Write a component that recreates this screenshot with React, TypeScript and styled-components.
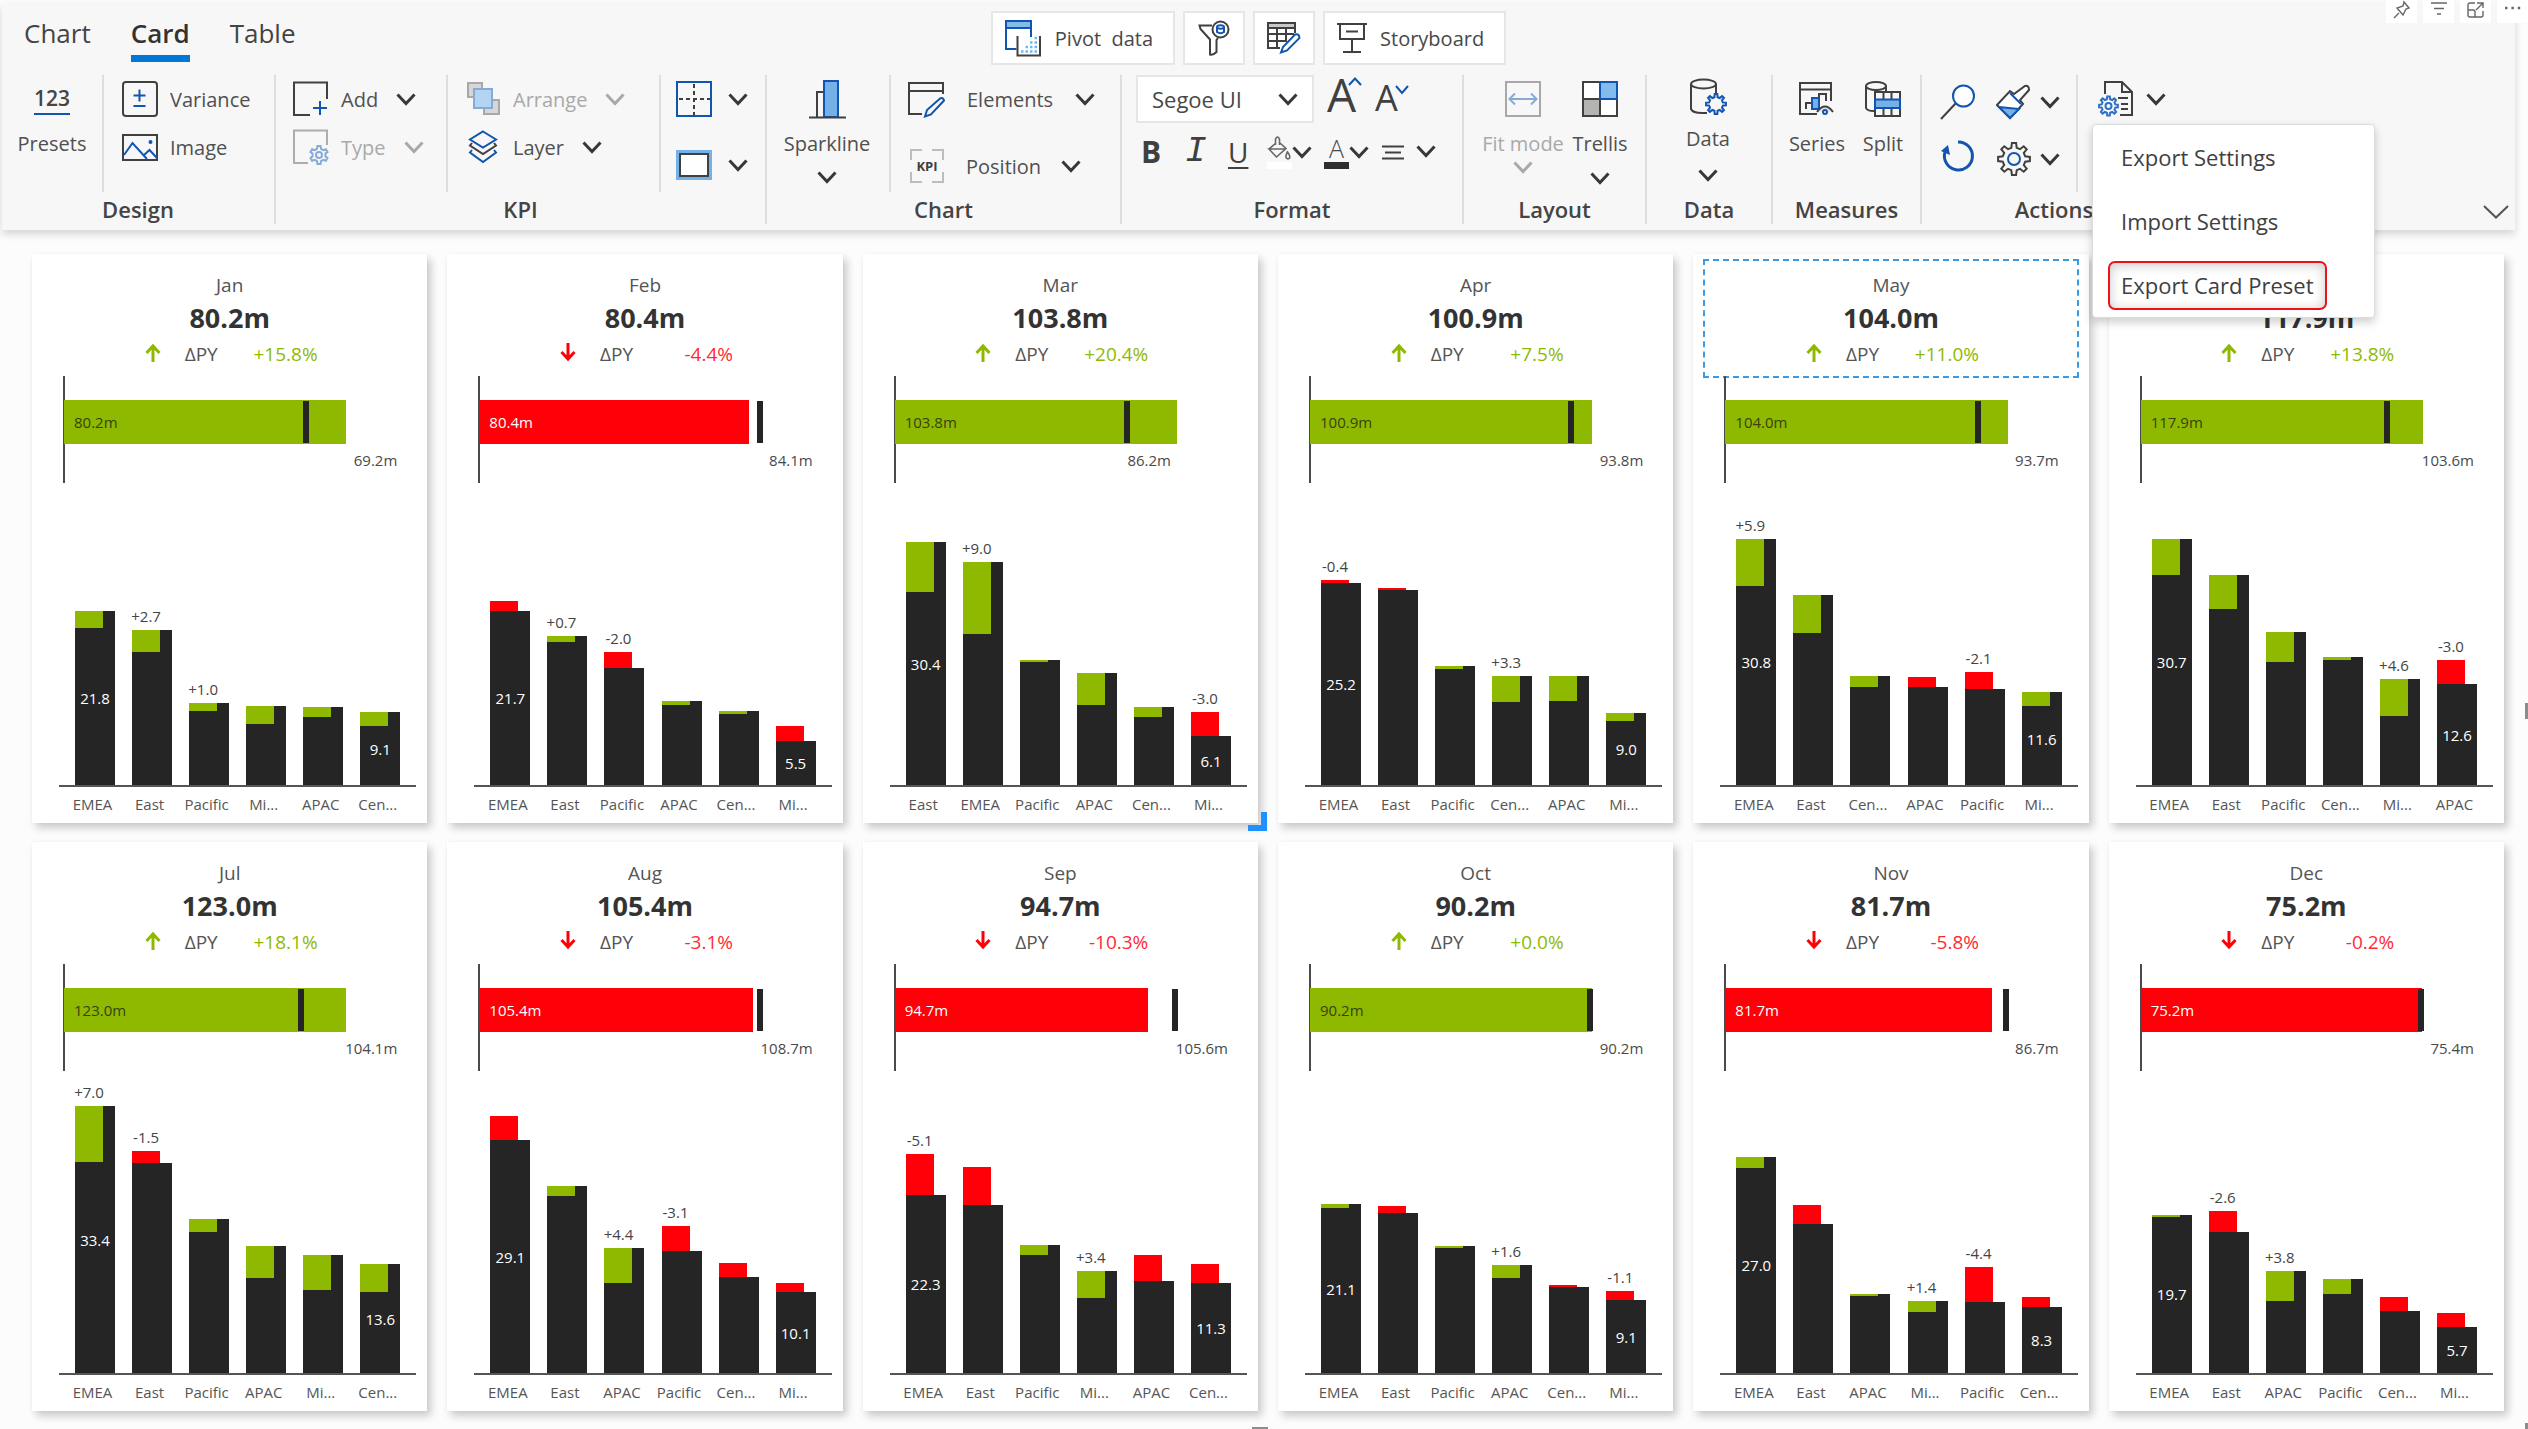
import React from "react";
import styled, { createGlobalStyle, css } from "styled-components";

const BLUE = "#1155b0";
const LIGHT = "#74b1e8";
const INK = "#404040";
const GREEN = "#8fb900";
const RED = "#ff0008";
const BAR = "#252525";
const UNIT = 8; /* pixels per million in the column charts */

const Global = createGlobalStyle`
  *, *::before, *::after { box-sizing: border-box; }
  body { margin: 0; background: #fcfcfc; }
  body, button, select { font-family: "Open Sans", "Noto Sans", sans-serif; color: #484848; }
  button { border: 0; padding: 0; background: none; cursor: pointer; font-size: 20px; }
  svg { display: block; flex: none; }
`;

/* ---------- page and ribbon ---------- */

const Page = styled.div`
  position: relative;
  min-height: 100vh;
  padding: 3px 13px 0 2px;
  background: #fcfcfc;
  overflow: hidden;
`;

const Ribbon = styled.header`
  background: #f7f7f7;
  box-shadow: 0 4px 8px rgba(0, 0, 0, 0.16);
  padding-bottom: 6px;
`;

const TopRow = styled.div`
  display: grid;
  grid-template-columns: 1fr auto 1fr;
  height: 72px;
  padding: 8px 20px 0 0;
`;

const Tabs = styled.nav`
  display: flex;
  gap: 40px;
  padding-left: 22px;
`;

const Tab = styled.button<{ $active?: boolean }>`
  height: 51px;
  font-size: 26px;
  line-height: 44px;
  border-bottom: 7px solid ${(p) => (p.$active ? "#0078d7" : "transparent")};
  font-weight: ${(p) => (p.$active ? 600 : 400)};
  color: ${(p) => (p.$active ? "#333" : "#444")};
`;

const TopTools = styled.div`
  display: flex;
  gap: 8px;
`;

const ToolBox = styled.button`
  display: flex;
  align-items: center;
  justify-content: center;
  gap: 13px;
  min-width: 62px;
  height: 54px;
  padding: 0 12px;
  background: #fff;
  border: 2px solid #e6e6e6;
  white-space: pre;

  span { padding-right: 8px; }
`;

const Groups = styled.div`
  display: flex;
  align-items: flex-start;
`;

const Group = styled.section<{ $w: number; $last?: boolean }>`
  flex: 0 0 ${(p) => p.$w}px;
  height: 149px;
  border-right: ${(p) => (p.$last ? "0" : "2px solid #dedede")};
`;

const GroupBody = styled.div`
  display: flex;
  height: 117px;
`;

const GroupName = styled.h2`
  margin: 0;
  font-size: 22px;
  font-weight: 600;
  line-height: 34px;
  text-align: center;
  color: #444;
`;

const Cluster = styled.div<{ $w?: number; $gap?: number; $line?: boolean; $pad?: number }>`
  display: flex;
  flex-direction: column;
  align-items: flex-start;
  gap: ${(p) => p.$gap || 0}px;
  ${(p) => (p.$w ? `flex: 0 0 ${p.$w}px;` : "flex: 1;")}
  padding-left: ${(p) => p.$pad || 0}px;
  border-right: ${(p) => (p.$line ? "2px solid #dedede" : "0")};
`;

const Item = styled.button<{ $off?: boolean; $gap?: number; $h?: number }>`
  display: flex;
  align-items: center;
  gap: ${(p) => p.$gap ?? 12}px;
  height: ${(p) => p.$h || 48}px;
  white-space: nowrap;
  color: ${(p) => (p.$off ? "#a9a9a9" : "#505050")};
`;

const IconSlot = styled.span<{ $w?: number }>`
  display: flex;
  justify-content: center;
  width: ${(p) => p.$w || 36}px;
`;

const Caret = styled.span`
  padding-left: 6px;
`;

const Tall = styled.button<{ $off?: boolean; $w: number; $icon?: number; $caret?: number }>`
  display: grid;
  grid-template-rows: ${(p) => p.$icon || 48}px 40px ${(p) => p.$caret || 28}px;
  place-items: center;
  width: ${(p) => p.$w}px;
  white-space: nowrap;
  color: ${(p) => (p.$off ? "#a9a9a9" : "#505050")};
`;

const LayoutBody = styled(GroupBody)`
  padding-left: 12px;
`;

const Digits = styled.span`
  font-size: 21px;
  font-weight: 600;
  line-height: 30px;
  color: #444;
  border-bottom: 2px solid ${BLUE};
`;

const FontRow = styled.div`
  display: flex;
  align-items: center;
  height: 48px;
  gap: 13px;
`;

const SelectWrap = styled.label`
  position: relative;
  display: block;

  svg {
    position: absolute;
    right: 16px;
    top: 18px;
    pointer-events: none;
  }
`;

const FontSelect = styled.select`
  appearance: none;
  display: block;
  width: 178px;
  height: 48px;
  padding: 0 40px 0 14px;
  border: 2px solid #e6e6e6;
  border-radius: 0;
  background: #fff;
  font-size: 22px;
`;

const SizeButton = styled.button<{ $big?: boolean }>`
  display: flex;
  align-items: flex-start;
  height: 48px;
  font-size: ${(p) => (p.$big ? 46 : 36)}px;
  line-height: ${(p) => (p.$big ? 38 : 46)}px;
  color: ${INK};

  svg { margin: 2px 0 0 ${(p) => (p.$big ? -8 : -3)}px; }
`;

const FormatRow = styled.div`
  display: grid;
  grid-template-columns: 44px 43px 44px 57px 52px 1fr;
  align-items: center;
  height: 48px;
  width: 310px;
  margin-top: 5px;
`;

const Glyph = styled.button<{ $kind: "b" | "i" | "u" }>`
  height: 48px;
  text-align: left;
  padding-left: 5px;
  line-height: 44px;
  color: ${INK};
  font-size: 30px;
  ${(p) => p.$kind === "b" && css`font-weight: 700;`}
  ${(p) => p.$kind === "i" && css`font-family: "Liberation Mono", monospace; font-style: italic; font-size: 36px;`}
  ${(p) => p.$kind === "u" && css`font-size: 28px; line-height: 42px; text-decoration: underline; text-decoration-thickness: 2px; text-underline-offset: 4px;`}
`;

const Swatch = styled.button<{ $color: string }>`
  display: flex;
  align-items: center;

  > span {
    display: flex;
    justify-content: center;
    width: 25px;
    height: 33px;
    font-size: 25px;
    font-weight: 300;
    line-height: 24px;
    border-bottom: 7px solid ${(p) => p.$color};
  }
`;

const AlignButton = styled.button`
  display: flex;
  gap: 12px;
  padding-left: 6px;
`;

const MenuAnchor = styled.div`
  position: relative;
`;

const Menu = styled.div`
  position: absolute;
  z-index: 5;
  top: 49px;
  left: -6px;
  display: grid;
  justify-items: start;
  gap: 15px;
  width: 283px;
  padding: 8px 0 7px 15px;
  background: #fff;
  border: 1px solid #dcdcdc;
  border-radius: 4px;
  box-shadow: 0 4px 10px rgba(0, 0, 0, 0.2);
`;

const MenuItem = styled.button<{ $marked?: boolean }>`
  height: 49px;
  padding: 0 11px 2px;
  border: 2px solid ${(p) => (p.$marked ? "#f0101a" : "transparent")};
  border-radius: 7px;
  box-shadow: ${(p) => (p.$marked ? "inset 0 2px 12px rgba(0, 0, 0, 0.22)" : "none")};
  font-size: 22px;
  white-space: nowrap;
  color: #404040;
`;

const Collapse = styled.button`
  margin: 130px 6px 0 auto;
`;

const VisualTools = styled.div`
  position: absolute;
  z-index: 6;
  top: 0;
  right: 0;
  display: flex;
  gap: 6px;

  button {
    display: flex;
    justify-content: center;
    width: 31px;
    height: 23px;
    background: #fff;
  }
`;

const Handle = styled.i<{ $at: "right" | "bottom" | "corner" }>`
  position: absolute;
  background: #8c8c8c;
  ${(p) => p.$at === "right" && css`right: 0; top: 703px; width: 3px; height: 16px;`}
  ${(p) => p.$at === "bottom" && css`left: 1252px; bottom: 0; width: 16px; height: 2px;`}
  ${(p) => p.$at === "corner" && css`right: 0; bottom: 0; width: 3px; height: 6px;`}
`;

/* ---------- cards ---------- */

const Board = styled.main`
  display: grid;
  grid-template-columns: repeat(6, minmax(0, 1fr));
  gap: 19px 20px;
  padding: 24px 11px 18px 30px;
`;

const CardBox = styled.article`
  position: relative;
  background: #fff;
  box-shadow: 4px 5px 8px rgba(0, 0, 0, 0.2), 0 0 4px rgba(0, 0, 0, 0.03);
`;

const Head = styled.div<{ $selected?: boolean }>`
  height: 115px;
  margin: 0 12px;
  padding-top: 11px;
  text-align: center;
  outline: ${(p) => (p.$selected ? "2px dashed #3c9be0" : "0")};
`;

const HeadPad = styled.div`
  padding-top: 7px;
`;

const Month = styled.div`
  height: 27px;
  font-size: 19px;
  line-height: 26px;
  color: #555;
`;

const Total = styled.div`
  font-size: 27px;
  font-weight: 700;
  line-height: 38px;
  color: #333;
`;

const Change = styled.div`
  display: flex;
  align-items: center;
  width: 176px;
  padding-left: 3px;
  margin: 0 auto;
  font-size: 19px;
  line-height: 34px;
  color: #555;

  svg { margin: 0 24px 4px 0; }
`;

const Percent = styled.span<{ $up: boolean }>`
  margin-left: auto;
  color: ${(p) => (p.$up ? GREEN : "#ff2a35")};
`;

const Bullet = styled.div`
  position: relative;
  height: 107px;
  margin: 0 30px 0 31px;
  padding-top: 24px;
  border-left: 2px solid #4a4a4a;
  font-size: 15px;
`;

const Track = styled.div`
  position: relative;
  width: 85%;
  height: 44px;
  margin-left: -1px;
`;

const Actual = styled.div<{ $up: boolean }>`
  height: 44px;
  padding-left: 10px;
  line-height: 44px;
  background: ${(p) => (p.$up ? GREEN : RED)};
  color: ${(p) => (p.$up ? "#37430c" : "#fff")};
`;

const Target = styled.div`
  position: absolute;
  top: 1px;
  width: 6px;
  height: 42px;
  margin-left: -5px;
  background: ${BAR};
`;

const TargetText = styled.div<{ $near?: boolean }>`
  line-height: 32px;
  text-align: right;
  color: #4a4a4a;
  padding-right: ${(p) => (p.$near ? 57 : 0)}px;
`;

const Plot = styled.div`
  display: flex;
  align-items: flex-end;
  justify-content: space-between;
  height: 304px;
  margin: 0 11px 0 27px;
  padding: 0 16px;
  border-bottom: 2px solid #555;
`;

const Column = styled.div`
  width: 40px;
`;

const DeltaText = styled.div`
  display: flex;
  justify-content: center;
  width: 28px;
  font-size: 15px;
  line-height: 28px;
  white-space: nowrap;
  color: #444;
`;

const Delta = styled.div<{ $up: boolean }>`
  width: 28px;
  background: ${(p) => (p.$up ? GREEN : RED)};
`;

const Bar = styled.div`
  position: relative;
  background: ${BAR};
  color: #fff;
  font-size: 15px;

  ${Delta} { position: absolute; top: 0; left: 0; }
`;

const Value = styled.span`
  display: flex;
  align-items: center;
  justify-content: center;
  height: 100%;
`;

const Regions = styled.div`
  display: grid;
  grid-template-columns: repeat(6, 1fr);
  margin: 0 21px 0 32px;
  font-size: 15px;
  line-height: 34px;
  height: 36px;
  text-align: center;
  color: #555;
`;

const Corner = styled.i`
  position: absolute;
  right: -9px;
  bottom: -8px;
  width: 19px;
  height: 19px;
  border: solid #1e90ff;
  border-width: 0 6px 6px 0;
`;

/* ---------- icons ---------- */

function gear(cx: number, cy: number, ro: number, ri: number, n = 8) {
  const step = (Math.PI * 2) / n;
  let d = "";
  for (let i = 0; i < n; i++) {
    const a = i * step - Math.PI / 2;
    const pts: [number, number][] = [
      [ri, a - step * 0.3],
      [ro, a - step * 0.17],
      [ro, a + step * 0.17],
      [ri, a + step * 0.3],
    ];
    pts.forEach(([r, t], k) => {
      d += (i || k ? "L" : "M") + (cx + r * Math.cos(t)).toFixed(1) + " " + (cy + r * Math.sin(t)).toFixed(1);
    });
  }
  return d + "Z";
}

const Svg = ({ w, h, c = INK, sw = 2, children }: { w: number; h: number; c?: string; sw?: number; children: React.ReactNode }) => (
  <svg width={w} height={h} viewBox={`0 0 ${w} ${h}`} fill="none" stroke={c} strokeWidth={sw} aria-hidden="true">
    {children}
  </svg>
);

const Chevron = ({ off, thin }: { off?: boolean; thin?: boolean }) =>
  thin ? (
    <Svg w={26} h={14} c="#555"><path d="M1 1 13 12.500 25 1" /></Svg>
  ) : (
    <Svg w={20} h={13} c={off ? "#a9a9a9" : "#383838"} sw={3}><path d="M1.500 1.500 10 10.500 18.500 1.500" /></Svg>
  );

const VarianceIcon = () => (
  <Svg w={36} h={36}><rect x="1" y="1" width="34" height="34" rx="3" /><path stroke={BLUE} d="M17.500 8.500v12M11.500 14.500h12M11.500 25h12" /></Svg>
);
const ImageIcon = () => (
  <Svg w={36} h={27}><rect x="1" y="1" width="34" height="25" /><path stroke={BLUE} d="M2 21 10.500 9 25 25M22 21l5.500-5L35 24" /><circle cx="28.500" cy="8" r="1" stroke={BLUE} fill={BLUE} /></Svg>
);
const AddIcon = () => (
  <Svg w={36} h={36}><path d="M34 18V1.500H1V34H17" /><path stroke={BLUE} d="M27 20v14M20 27h14" /></Svg>
);
const TypeIcon = () => (
  <Svg w={36} h={36} c="#adadad"><path d="M34 16V1.500H1V34H15" /><path stroke="#86abd8" d={gear(26, 26, 9, 6.5, 6)} /><circle cx="26" cy="26" r="3" stroke="#86abd8" /></Svg>
);
const ArrangeIcon = () => (
  <Svg w={33} h={34} c="#a8a8a8"><rect x="1" y="1" width="14" height="14" fill="#d6d6d6" /><rect x="17" y="18" width="15" height="14" fill="#d6d6d6" /><rect x="7" y="7" width="18" height="19" fill="#b5d4f2" stroke="#86abd8" /></Svg>
);
const LayerIcon = () => (
  <Svg w={32} h={34}><path stroke={BLUE} d="M5 20 3 22.500 16 32 29 22.500 27 20" /><path d="M5 13 3 15.500 16 24 29 15.500 27 13" /><path stroke={BLUE} fill="#f7f7f7" d="M16 1.500 29 9.500 16 17.500 3 9.500Z" /></Svg>
);
const BordersIcon = () => (
  <Svg w={36} h={36}><path strokeDasharray="4 3" d="M18 3V34M3 18H34" /><rect x="1" y="1" width="34" height="34" stroke={BLUE} /></Svg>
);
const FrameIcon = () => (
  <Svg w={36} h={30}><rect width="36" height="30" fill={LIGHT} stroke="none" /><rect x="4" y="4" width="28" height="22" fill="#fff" /></Svg>
);
const SparkIcon = () => (
  <Svg w={37} h={39}><path d="M8 37V12h8" /><rect x="15" y="1" width="14" height="36" fill={LIGHT} stroke={BLUE} /><path d="M0 37.500H37" /></Svg>
);
const ElementsIcon = () => (
  <Svg w={37} h={37}><path d="M35 13V2H1V33H14M1 10H35" /><path stroke={BLUE} fill="#f7f7f7" d="M17 35.500 19 29 32 17.500Q35 16 36 19.500L23 33.500Z" /></Svg>
);
const KpiIcon = () => (
  <Svg w={34} h={34} c="#bdbdbd">
    <path d="M1 11V1H12M22 1H33V11M33 23V33H22M12 33H1V23" />
    <text x="17" y="22" textAnchor="middle" fontSize="13" fontWeight="700" fontFamily="Open Sans, sans-serif" fill={INK} stroke="none">KPI</text>
  </Svg>
);
const FitIcon = () => (
  <Svg w={36} h={36} c="#a8a8a8"><rect x="1" y="1" width="34" height="34" /><path stroke="#86abd8" d="M5 18H31M10 12.500 4.500 18 10 23.500M26 12.500 31.500 18 26 23.500" /></Svg>
);
const TrellisIcon = () => (
  <Svg w={36} h={36}><rect x="1" y="1" width="34" height="34" fill="#fff" /><rect x="1" y="18" width="17" height="17" fill="#b4b4b2" /><path d="M18 18V35" /><rect x="18" y="1" width="17" height="17" fill="#82bbec" stroke={BLUE} /></Svg>
);
const DataIcon = () => (
  <Svg w={37} h={37}><ellipse cx="13.500" cy="6" rx="12.500" ry="4.500" /><path d="M1 6V31Q3 35.500 14 35H17M26 6V15" /><path stroke={BLUE} fill="#f7f7f7" d={gear(26, 26, 10, 7)} /></Svg>
);
const SeriesIcon = () => (
  <Svg w={36} h={36}><path d="M32 20V2H1V33H18M1 8.500H32" /><path d="M7 28V22h6M20 28V13h7v7" /><rect x="13" y="17" width="7" height="11" fill={LIGHT} stroke={BLUE} /><path d="M18 31Q26 20 34 31" fill="#e6e6e6" /><circle cx="26" cy="31" r="2" stroke={BLUE} /></Svg>
);
const SplitIcon = () => (
  <Svg w={36} h={36}><ellipse cx="11" cy="5" rx="10" ry="4" /><path d="M1 5V27Q2 30 9 30M21 5V10" /><rect x="10" y="11" width="25" height="24" fill="#f7f7f7" /><path d="M18.500 11V35M26.500 11V35" /><rect x="10" y="18.500" width="25" height="8.500" fill={LIGHT} stroke={BLUE} /></Svg>
);
const SearchIcon = () => (
  <Svg w={36} h={36}><path d="M16 19 1 35" /><circle cx="23.500" cy="12" r="10.500" fill="#fff" stroke={BLUE} /></Svg>
);
const BrushIcon = () => (
  <Svg w={36} h={36}><path fill="#fff" d="M1 21 14 7 18 10 29 2Q33 1 33 6L24 16 27 20 14 34Z" /><path fill={LIGHT} stroke={BLUE} d="M3 23 23 25 14 34Z" /><path stroke={BLUE} d="M14 9 25 20" /></Svg>
);
const ResetIcon = () => (
  <Svg w={36} h={36} c={BLUE} sw={3}><path d="M18 4A14 14 0 1 1 5 14" /><path fill={BLUE} stroke="none" d="M1 13 8 7 10 17Z" /></Svg>
);
const GearIcon = () => (
  <Svg w={36} h={36}><path d={gear(18, 18, 16, 11.5)} /><circle cx="18" cy="18" r="6" stroke={BLUE} /></Svg>
);
const DocGearIcon = () => (
  <Svg w={36} h={36}><path d="M7 13V1H24L34 11V34H22M24 1V11H34M20 17H30M23 23H30M23 28H30" /><path stroke="#2f6fc4" d={gear(10.5, 25, 9.5, 7)} /><circle cx="10.500" cy="25" r="3" stroke="#2f6fc4" /></Svg>
);
const PivotIcon = () => (
  <Svg w={37} h={37}>
    <rect x="1" y="1" width="25" height="28" fill="#fff" stroke={BLUE} /><rect x="1" y="1" width="25" height="7" fill="#82bbec" stroke={BLUE} />
    <path fill="#fff" stroke="none" d="M11.500 17H36V36H11.500Z" />
    <path d="M12.500 16V35.500H35V16" />
    <path stroke="#6fb8ee" strokeWidth="2.500" strokeDasharray="2.500 2" d="M16 31.500H33M20.500 27H33M25 22.500H33M29.500 18H33" />
  </Svg>
);
const FilterIcon = () => (
  <Svg w={32} h={37}>
    <path d="M14 5.500H1.500L2.500 9 12 19.500V34.500Q15 35.500 18.500 32V20L20 18" />
    <circle cx="22.500" cy="9.500" r="8" fill="#fff" />
    <ellipse cx="22.500" cy="7" rx="3.500" ry="1.800" stroke={BLUE} /><path stroke={BLUE} d="M19 7V12Q22.500 14.500 26 12V7" />
  </Svg>
);
const TableEditIcon = () => (
  <Svg w={34} h={32}><rect x="1" y="1" width="27" height="5" fill="#c8c8c8" /><path d="M28 11V1H1V26H13M1 12H27M1 19H19M10 6V26M19 6V20" /><path stroke={BLUE} fill="#fff" d="M14 30.500 16 25 28 12.500Q32 11 32.500 16L20 28.500Z" /></Svg>
);
const StoryIcon = () => (
  <Svg w={30} h={32}><path d="M0 2H30M3 2V17H27V2M9 9.500H21M15 17V30M6 30H24" /></Svg>
);
const BucketIcon = () => (
  <Svg w={25} h={24} c="#666" sw={1.6}><path d="M2 13 9 7M13 7 19 12.500 9.500 21 2 13H19M8.500 9V3Q10.500-1 12.500 3V9" /><path d="M20.500 16Q25 22 21 23 17 22 20.500 16Z" /></Svg>
);
const AlignIcon = () => (
  <Svg w={22} h={15}><path d="M0 1.500H22M3 7.500H19M0 13.500H22" /></Svg>
);

const Arrow = ({ up }: { up: boolean }) => (
  <Svg w={16} h={19} c={up ? GREEN : RED} sw={3}>
    {up ? <path d="M8 19V2.500M1.500 10 8 3 14.500 10" /> : <path d="M8 0V16.500M1.500 9 8 16 14.500 9" />}
  </Svg>
);

/* ---------- data ---------- */

type Col = [string, number, number, boolean?]; /* region, value, delta, delta label shown */
type CardData = { m: string; act: number; tgt: number; pct: string; cols: Col[]; near?: boolean; selected?: boolean; corner?: boolean };

const CARDS: CardData[] = [
  { m: "Jan", act: 80.2, tgt: 69.2, pct: "+15.8%", cols: [["EMEA", 21.8, 2.1], ["East", 19.4, 2.7, true], ["Pacific", 10.2, 1.0, true], ["Mi...", 9.9, 2.3], ["APAC", 9.8, 1.3], ["Cen...", 9.1, 1.7]] },
  { m: "Feb", act: 80.4, tgt: 84.1, pct: "-4.4%", cols: [["EMEA", 21.7, -1.3], ["East", 18.6, 0.7, true], ["Pacific", 14.6, -2.0, true], ["APAC", 10.5, 0.5], ["Cen...", 9.3, 0.4], ["Mi...", 5.5, -1.9]] },
  { m: "Mar", act: 103.8, tgt: 86.2, pct: "+20.4%", near: true, corner: true, cols: [["East", 30.4, 6.2], ["EMEA", 27.9, 9.0, true], ["Pacific", 15.6, 0.3], ["APAC", 14.0, 4.0], ["Cen...", 9.8, 1.3], ["Mi...", 6.1, -3.0, true]] },
  { m: "Apr", act: 100.9, tgt: 93.8, pct: "+7.5%", cols: [["EMEA", 25.2, -0.4, true], ["East", 24.4, -0.2], ["Pacific", 14.9, 0.4], ["Cen...", 13.6, 3.3, true], ["APAC", 13.6, 3.1], ["Mi...", 9.0, 1.0]] },
  { m: "May", act: 104.0, tgt: 93.7, pct: "+11.0%", selected: true, cols: [["EMEA", 30.8, 5.9, true], ["East", 23.8, 4.8], ["Cen...", 13.6, 1.4], ["APAC", 12.2, -1.2], ["Pacific", 12.0, -2.1, true], ["Mi...", 11.6, 1.7]] },
  { m: "", act: 117.9, tgt: 103.6, pct: "+13.8%", cols: [["EMEA", 30.7, 4.5], ["East", 26.2, 4.3], ["Pacific", 19.1, 3.7], ["Cen...", 16.0, 0.4], ["Mi...", 13.3, 4.6, true], ["APAC", 12.6, -3.0, true]] },
  { m: "Jul", act: 123.0, tgt: 104.1, pct: "+18.1%", cols: [["EMEA", 33.4, 7.0, true], ["East", 26.2, -1.5, true], ["Pacific", 19.3, 1.6], ["APAC", 15.9, 4.0], ["Mi...", 14.7, 4.4], ["Cen...", 13.6, 3.5]] },
  { m: "Aug", act: 105.4, tgt: 108.7, pct: "-3.1%", cols: [["EMEA", 29.1, -3.0], ["East", 23.4, 1.2], ["APAC", 15.6, 4.4, true], ["Pacific", 15.3, -3.1, true], ["Cen...", 12.0, -1.7], ["Mi...", 10.1, -1.1]] },
  { m: "Sep", act: 94.7, tgt: 105.6, pct: "-10.3%", cols: [["EMEA", 22.3, -5.1, true], ["East", 21.0, -4.8], ["Pacific", 16.0, 1.2], ["Mi...", 12.7, 3.4, true], ["APAC", 11.5, -3.2], ["Cen...", 11.3, -2.4]] },
  { m: "Oct", act: 90.2, tgt: 90.2, pct: "+0.0%", cols: [["EMEA", 21.1, 0.5], ["East", 20.0, -0.9], ["Pacific", 15.9, 0.3], ["APAC", 13.5, 1.6, true], ["Cen...", 10.7, -0.2], ["Mi...", 9.1, -1.1, true]] },
  { m: "Nov", act: 81.7, tgt: 86.7, pct: "-5.8%", cols: [["EMEA", 27.0, 1.4], ["East", 18.6, -2.4], ["APAC", 9.9, 0.2], ["Mi...", 9.0, 1.4, true], ["Pacific", 8.9, -4.4, true], ["Cen...", 8.3, -1.3]] },
  { m: "Dec", act: 75.2, tgt: 75.4, pct: "-0.2%", cols: [["EMEA", 19.7, 0.2], ["East", 17.6, -2.6, true], ["APAC", 12.7, 3.8, true], ["Pacific", 11.8, 1.9], ["Cen...", 7.7, -1.7], ["Mi...", 5.7, -1.8]] },
];

const px = (v: number) => Math.round(Math.abs(v) * UNIT);

function KpiCard({ d }: { d: CardData }) {
  const up = d.pct[0] === "+";
  const max = Math.max(d.act, d.tgt);
  return (
    <CardBox>
      <HeadPad>
        <Head $selected={d.selected}>
          <Month>{d.m}</Month>
          <Total>{d.act.toFixed(1)}m</Total>
          <Change>
            <Arrow up={up} />
            ΔPY
            <Percent $up={up}>{d.pct}</Percent>
          </Change>
        </Head>
      </HeadPad>
      <Bullet>
        <Track>
          <Actual $up={up} style={{ width: `${(d.act / max) * 100}%` }}>{d.act.toFixed(1)}m</Actual>
          <Target style={{ left: `${(d.tgt / max) * 100}%` }} />
        </Track>
        <TargetText $near={d.near}>{d.tgt.toFixed(1)}m</TargetText>
      </Bullet>
      <Plot>
        {d.cols.map(([name, v, dv, label], i) => (
          <Column key={name}>
            {label && <DeltaText>{(dv > 0 ? "+" : "") + dv.toFixed(1)}</DeltaText>}
            {dv < 0 && <Delta $up={false} style={{ height: px(dv) }} />}
            <Bar style={{ height: px(v) }}>
              {dv > 0 && <Delta $up style={{ height: px(dv) }} />}
              {(i === 0 || i === 5) && <Value>{v.toFixed(1)}</Value>}
            </Bar>
          </Column>
        ))}
      </Plot>
      <Regions>{d.cols.map((c) => <span key={c[0]}>{c[0]}</span>)}</Regions>
      {d.corner && <Corner />}
    </CardBox>
  );
}

export default function App() {
  return (
    <Page>
      <Global />
      <Ribbon>
        <TopRow>
          <Tabs>
            <Tab>Chart</Tab>
            <Tab $active>Card</Tab>
            <Tab>Table</Tab>
          </Tabs>
          <TopTools>
            <ToolBox><PivotIcon /><span>{"Pivot  data"}</span></ToolBox>
            <ToolBox aria-label="Filter"><FilterIcon /></ToolBox>
            <ToolBox aria-label="Edit table"><TableEditIcon /></ToolBox>
            <ToolBox><StoryIcon /><span>Storyboard</span></ToolBox>
          </TopTools>
        </TopRow>

        <Groups>
          <Group $w={274}>
            <GroupBody>
              <Cluster $w={102} $line>
                <Tall $w={100}><Digits>123</Digits><span>Presets</span></Tall>
              </Cluster>
              <Cluster $pad={18}>
                <Item><VarianceIcon />Variance</Item>
                <Item><ImageIcon />Image</Item>
              </Cluster>
            </GroupBody>
            <GroupName>Design</GroupName>
          </Group>

          <Group $w={491}>
            <GroupBody>
              <Cluster $w={172} $pad={17} $line>
                <Item><AddIcon />Add<Caret><Chevron /></Caret></Item>
                <Item $off><TypeIcon />Type<Caret><Chevron off /></Caret></Item>
              </Cluster>
              <Cluster $w={213} $pad={17} $line>
                <Item $off><IconSlot><ArrangeIcon /></IconSlot>Arrange<Caret><Chevron off /></Caret></Item>
                <Item><IconSlot><LayerIcon /></IconSlot>Layer<Caret><Chevron /></Caret></Item>
              </Cluster>
              <Cluster $pad={15} $gap={18}>
                <Item $gap={16} aria-label="Borders"><BordersIcon /><Chevron /></Item>
                <Item $gap={16} aria-label="Fill"><FrameIcon /><Chevron /></Item>
              </Cluster>
            </GroupBody>
            <GroupName>KPI</GroupName>
          </Group>

          <Group $w={355}>
            <GroupBody>
              <Cluster $w={124} $line>
                <Tall $w={120}><SparkIcon /><span>Sparkline</span><Chevron /></Tall>
              </Cluster>
              <Cluster $pad={17} $gap={19}>
                <Item $gap={22}><ElementsIcon />Elements<Chevron /></Item>
                <Item $gap={20}><IconSlot $w={38}><KpiIcon /></IconSlot>Position<Chevron /></Item>
              </Cluster>
            </GroupBody>
            <GroupName>Chart</GroupName>
          </Group>

          <Group $w={342}>
            <GroupBody>
              <Cluster $pad={14}>
                <FontRow>
                  <SelectWrap>
                    <FontSelect aria-label="Font family"><option>Segoe UI</option></FontSelect>
                    <Chevron />
                  </SelectWrap>
                  <SizeButton $big aria-label="Increase font size">A<Svg w={14} h={9} c={BLUE}><path d="M1 8 7 1.500 13 8" /></Svg></SizeButton>
                  <SizeButton aria-label="Decrease font size">A<Svg w={14} h={18} c={BLUE}><path d="M1 9 7 16 13 9" /></Svg></SizeButton>
                </FontRow>
                <FormatRow>
                  <Glyph $kind="b">B</Glyph>
                  <Glyph $kind="i">I</Glyph>
                  <Glyph $kind="u">U</Glyph>
                  <Swatch $color="#fff" aria-label="Fill colour"><span><BucketIcon /></span><Chevron /></Swatch>
                  <Swatch $color="#2e2e2e" aria-label="Font colour"><span>A</span><Chevron /></Swatch>
                  <AlignButton aria-label="Alignment"><AlignIcon /><Chevron /></AlignButton>
                </FormatRow>
              </Cluster>
            </GroupBody>
            <GroupName>Format</GroupName>
          </Group>

          <Group $w={183}>
            <LayoutBody>
              <Tall $w={94} $off $caret={8}><FitIcon /><span>Fit mode</span><Chevron off /></Tall>
              <Tall $w={60} $caret={30}><TrellisIcon /><span>Trellis</span><Chevron /></Tall>
            </LayoutBody>
            <GroupName>Layout</GroupName>
          </Group>

          <Group $w={126}>
            <GroupBody>
              <Tall $w={122} $icon={43} $caret={34}><DataIcon /><span>Data</span><Chevron /></Tall>
            </GroupBody>
            <GroupName>Data</GroupName>
          </Group>

          <Group $w={149}>
            <GroupBody>
              <Tall $w={88}><SeriesIcon /><span>Series</span></Tall>
              <Tall $w={44}><SplitIcon /><span>Split</span></Tall>
            </GroupBody>
            <GroupName>Measures</GroupName>
          </Group>

          <Group $w={264} $last>
            <GroupBody>
              <Cluster $w={74} $pad={18}>
                <Item $h={54} aria-label="Search"><SearchIcon /></Item>
                <Item $h={54} aria-label="Reset"><ResetIcon /></Item>
              </Cluster>
              <Cluster $w={82} $line>
                <Item $h={54} $gap={8} aria-label="Format painter"><BrushIcon /><Chevron /></Item>
                <Item $h={60} $gap={8} aria-label="Settings"><GearIcon /><Chevron /></Item>
              </Cluster>
              <Cluster $pad={20}>
                <MenuAnchor>
                  <Item aria-label="Export"><DocGearIcon /><Chevron /></Item>
                  <Menu role="menu">
                    <MenuItem role="menuitem">Export Settings</MenuItem>
                    <MenuItem role="menuitem">Import Settings</MenuItem>
                    <MenuItem role="menuitem" $marked>Export Card Preset</MenuItem>
                  </Menu>
                </MenuAnchor>
              </Cluster>
            </GroupBody>
            <GroupName>Actions</GroupName>
          </Group>
          <Collapse aria-label="Collapse ribbon"><Chevron thin /></Collapse>
        </Groups>
      </Ribbon>

      <Board>
        {CARDS.map((d) => <KpiCard key={d.act} d={d} />)}
      </Board>

      <VisualTools>
        <button aria-label="Pin"><Svg w={18} h={20} c="#666" sw={1.4}><path d="M1 18 6 13M11 2 16 8 13 9 10 15 4 8 10 6Z" /></Svg></button>
        <button aria-label="Filters"><Svg w={18} h={20} c="#666" sw={1.6}><path d="M1 3H17M4 8.500H14M7 14H11" /></Svg></button>
        <button aria-label="Focus mode"><Svg w={18} h={20} c="#666" sw={1.4}><path d="M8 3H3Q1 3 1 5V15Q1 17 3 17H14Q16 17 16 15V11M10 3H16V8M16 3 9 10M1 10H6Q8 10 8 12V17" /></Svg></button>
        <button aria-label="More options"><Svg w={18} h={16} c="#666" sw={2.4}><path strokeDasharray="2.400 4" d="M1 8H17" /></Svg></button>
      </VisualTools>
      <Handle $at="right" />
      <Handle $at="bottom" />
      <Handle $at="corner" />
    </Page>
  );
}
